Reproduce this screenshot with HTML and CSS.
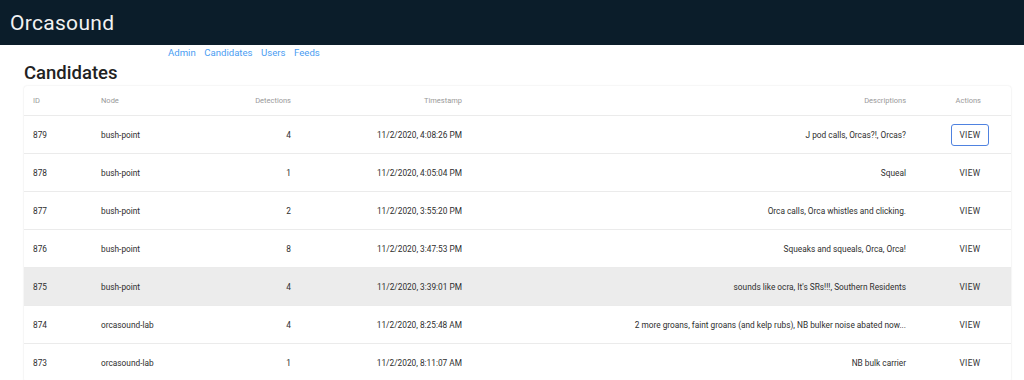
FILE: index.html
```html
<!DOCTYPE html>
<html>
<head>
<meta charset="utf-8">
<link rel="stylesheet" href="styles.css">
</head>
<body>
<header class="topbar"><span class="brand">Orcasound</span></header>
<div class="content">
  <nav class="nav">
    <a href="#">Admin</a><a href="#">Candidates</a><a href="#">Users</a><a href="#">Feeds</a>
  </nav>
  <h1 class="title">Candidates</h1>
  <div class="card">
    <table class="table">
      <thead>
        <tr><th class="c-id">ID</th><th class="c-node">Node</th><th class="c-det num">Detections</th><th class="c-ts num">Timestamp</th><th class="c-desc num">Descriptions</th><th class="c-act act">Actions</th></tr>
      </thead>
      <tbody>
        <tr><td>879</td><td>bush-point</td><td class="num">4</td><td class="num">11/2/2020, 4:08:26 PM</td><td class="num">J pod calls, Orcas?!, Orcas?</td><td class="act"><button class="view focused">VIEW</button></td></tr>
        <tr><td>878</td><td>bush-point</td><td class="num">1</td><td class="num">11/2/2020, 4:05:04 PM</td><td class="num">Squeal</td><td class="act"><button class="view">VIEW</button></td></tr>
        <tr><td>877</td><td>bush-point</td><td class="num">2</td><td class="num">11/2/2020, 3:55:20 PM</td><td class="num">Orca calls, Orca whistles and clicking.</td><td class="act"><button class="view">VIEW</button></td></tr>
        <tr><td>876</td><td>bush-point</td><td class="num">8</td><td class="num">11/2/2020, 3:47:53 PM</td><td class="num">Squeaks and squeals, Orca, Orca!</td><td class="act"><button class="view">VIEW</button></td></tr>
        <tr class="hover"><td>875</td><td>bush-point</td><td class="num">4</td><td class="num">11/2/2020, 3:39:01 PM</td><td class="num">sounds like ocra, It's SRs!!!, Southern Residents</td><td class="act"><button class="view">VIEW</button></td></tr>
        <tr><td>874</td><td>orcasound-lab</td><td class="num">4</td><td class="num">11/2/2020, 8:25:48 AM</td><td class="num">2 more groans, faint groans (and kelp rubs), NB bulker noise abated now...</td><td class="act"><button class="view">VIEW</button></td></tr>
        <tr><td>873</td><td>orcasound-lab</td><td class="num">1</td><td class="num">11/2/2020, 8:11:07 AM</td><td class="num">NB bulk carrier</td><td class="act"><button class="view">VIEW</button></td></tr>
      </tbody>
    </table>
  </div>
</div>
</body>
</html>
```

FILE: styles.css
```css
html, body {
  margin: 0;
  padding: 0;
  background: #ffffff;
  font-family: Roboto, "Liberation Sans", Arial, sans-serif;
  color: rgba(0,0,0,0.87);
}
.topbar {
  height: 45px;
  background: #0b1d2a;
  display: flex;
  align-items: center;
  padding-left: 10px;
  box-sizing: border-box;
}
.brand {
  color: #f2f2f2;
  font-size: 21px;
  letter-spacing: 0.3px;
}
.content {
  padding: 0 13px 0 24px;
}
.nav {
  display: flex;
  gap: 8.5px;
  padding-left: 144px;
  padding-top: 1px;
  height: 14px;
}
.nav a {
  color: #4a9df2;
  text-decoration: none;
  font-size: 9.6px;
  line-height: 14px;
}
.title {
  margin: 0;
  font-size: 18.5px;
  font-weight: 500;
  line-height: 26px;
  color: #222;
  height: 26px;
}
.card {
  background: #fff;
  border-radius: 3px;
  box-shadow: 0 0 2px rgba(0,0,0,0.12), 0 1px 1px rgba(0,0,0,0.06);
  overflow: hidden;
}
.table {
  width: 100%;
  border-collapse: collapse;
  table-layout: fixed;
}
.table th, .table td {
  border-bottom: 1px solid #ebebeb;
  padding: 0 8px;
  white-space: nowrap;
  overflow: hidden;
  text-overflow: ellipsis;
  text-align: left;
}
.table th {
  height: 29px;
  font-size: 7.5px;
  font-weight: 400;
  color: #999;
}
.table td {
  height: 37px;
  font-size: 8.3px;
  color: #2e2e2e;
}
.table .num { text-align: right; }
.table .act { text-align: right; }
.c-id { width: 52px; }
.c-node { width: 90px; }
.c-det { width: 84px; }
.c-ts { width: 155px; }
.c-desc { width: auto; }
.c-act { width: 42px; }
.table th.c-id, .table tbody td:first-child { padding-left: 9px; }
.table th.c-desc, .table tbody td:nth-child(5) { padding-right: 25px; }
.table th.c-act { padding-right: 30px; }
.table td.act { padding-right: 22px; }
.hover td { background: #ececec; }
.view {
  font-family: inherit;
  font-size: 8.3px;
  font-weight: 400;
  color: #333;
  background: transparent;
  border: 1px solid transparent;
  border-radius: 3px;
  letter-spacing: 0.4px;
  width: 38px;
  height: 22px;
  padding: 0;
  vertical-align: middle;
}
.view.focused {
  border: 1.5px solid #4f82e0;
}
```
